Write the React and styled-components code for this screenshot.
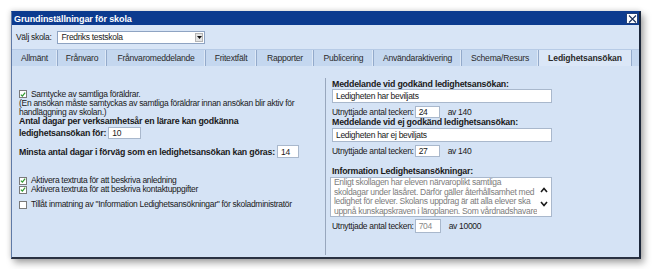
import React from 'react';
import styled, { createGlobalStyle } from 'styled-components';

const Global = createGlobalStyle`
  html, body { margin: 0; padding: 0; background: #ffffff; }
  body { font-family: "Liberation Sans", Arial, sans-serif; color: #1a1a1a; }
  * { box-sizing: border-box; }
`;

const Page = styled.div`
  width: 654px;
  height: 269px;
  padding: 11px 0 0 11px;
  overflow: hidden;
`;

const Window = styled.div`
  width: 630px;
  height: 248px;
  display: flex;
  flex-direction: column;
  background: #d5e3f5;
  border-left: 1px solid #5f7aa6;
  border-top: 1px solid #0c3b8f;
  border-right: 2px solid #1c273a;
  border-bottom: 2px solid #2a3242;
  box-shadow: 3px 4px 7px rgba(0, 0, 0, 0.35), -1px -1px 5px rgba(0, 0, 0, 0.12);
`;

const TitleBar = styled.div`
  height: 13px;
  background: #0c3b8f;
  display: flex;
  align-items: center;
  justify-content: space-between;
  padding-left: 2px;
  color: #ffffff;
  font-weight: bold;
  font-size: 9px;
  letter-spacing: -0.1px;
`;

const CloseButton = styled.div`
  width: 12px;
  height: 11px;
  margin-right: 1px;
  background: #ffffff;
  border: 1px solid #1f3f7a;
  display: flex;
  align-items: center;
  justify-content: center;
`;

const SchoolRow = styled.div`
  height: 24px;
  display: flex;
  align-items: center;
  padding-left: 4px;
  background: #d8e5f6;
  font-size: 8.5px;
  letter-spacing: -0.3px;
`;

const Select = styled.div`
  margin-left: 6px;
  width: 148px;
  height: 13px;
  background: #ffffff;
  border: 1px solid #8ea3c2;
  display: flex;
  align-items: center;
  justify-content: space-between;
  padding-left: 3px;
`;

const SelectArrow = styled.div`
  width: 8px;
  height: 9px;
  margin-right: 1px;
  background: #e4e4e4;
  border: 1px solid #b5b5b5;
  display: flex;
  align-items: center;
  justify-content: center;
`;

const TabStrip = styled.div`
  height: 17px;
  display: flex;
  background: #c4d7ef;
  border-top: 1px solid #b7cbe6;
`;

const Tab = styled.div`
  width: ${p => p.$w}px;
  display: flex;
  align-items: center;
  justify-content: center;
  font-size: 8.6px;
  letter-spacing: ${p => (p.$active ? -0.1 : -0.25)}px;
  color: #2a2a2a;
  border-right: 1px solid #93aacb;
  box-shadow: inset -1px 0 0 #dde8f6;
  background: ${p => (p.$active ? '#dbe7f7' : 'transparent')};
  font-weight: ${p => (p.$active ? 'bold' : 'normal')};
`;

const Content = styled.div`
  flex: 1;
  display: flex;
`;

const LeftPanel = styled.div`
  width: 313px;
  padding: 23px 0 0 7px;
  display: flex;
  flex-direction: column;
  font-size: 8.5px;
  letter-spacing: -0.3px;
`;

const Divider = styled.div`
  width: 1px;
  margin: 12px 0 2px;
  background: #98a7bd;
`;

const RightPanel = styled.div`
  flex: 1;
  padding: 13px 0 0 6px;
  display: flex;
  flex-direction: column;
  font-size: 8.5px;
  letter-spacing: -0.3px;
`;

const CheckRow = styled.div`
  height: ${p => p.$h}px;
  line-height: ${p => p.$h}px;
  margin-top: ${p => p.$mt || 0}px;
  display: flex;
  align-items: center;
  gap: 4px;
  white-space: nowrap;
`;

const Box = styled.span`
  width: 8px;
  height: 8px;
  flex: none;
  background: #ffffff;
  border: 1px solid #7a7a7a;
  display: flex;
  align-items: center;
  justify-content: center;
`;

const Note = styled.div`
  line-height: 9px;
  white-space: nowrap;
`;

const BoldLine = styled.div`
  font-weight: bold;
  font-size: 8.8px;
  letter-spacing: -0.2px;
  line-height: ${p => p.$lh || 9}px;
  margin-top: ${p => p.$mt || 0}px;
  white-space: nowrap;
`;

const FieldRow = styled.div`
  height: ${p => p.$h}px;
  margin-top: ${p => p.$mt || 0}px;
  display: flex;
  align-items: center;
  white-space: nowrap;
  font-weight: ${p => (p.$bold ? 'bold' : 'normal')};
  font-size: ${p => (p.$bold ? 8.8 : 8.5)}px;
  letter-spacing: ${p => (p.$bold ? -0.2 : -0.3)}px;
`;

const SmallInput = styled.div`
  width: ${p => p.$w}px;
  height: 100%;
  margin-left: ${p => p.$ml || 1}px;
  margin-right: ${p => p.$mr || 0}px;
  background: #ffffff;
  border: 1px solid #a9b8cc;
  display: flex;
  align-items: center;
  padding-left: 3px;
  font-weight: normal;
  font-size: 8.5px;
  letter-spacing: -0.3px;
  color: ${p => (p.$muted ? '#8a8a8a' : '#1a1a1a')};
`;

const TextInput = styled.div`
  width: 220px;
  height: ${p => p.$h}px;
  margin-top: ${p => p.$mt || 0}px;
  background: #ffffff;
  border: 1px solid #a9b8cc;
  display: flex;
  align-items: center;
  padding-left: 3px;
`;

const TextArea = styled.div`
  width: 222px;
  height: 40px;
  margin-top: 1px;
  margin-left: -2px;
  background: #ffffff;
  border: 1px solid #a9b8cc;
  display: flex;
  color: #7d7d7d;
  line-height: 9.5px;
  padding: 0 0 0 3px;
  overflow: hidden;
`;

const AreaText = styled.div`
  flex: 1;
  white-space: nowrap;
  overflow: hidden;
`;

const Scroll = styled.div`
  width: 14px;
  flex: none;
  display: flex;
  flex-direction: column;
  justify-content: center;
  align-items: center;
  gap: 8px;
`;

const Check = () => (
  <svg width="7" height="7" viewBox="0 0 7 7">
    <path d="M1 3.6 L2.8 5.4 L6 1.4" fill="none" stroke="#2f9a2f" strokeWidth="1.5" />
  </svg>
);

const Chevron = ({ up }) => (
  <svg width="8" height="6" viewBox="0 0 8 6">
    <path
      d={up ? 'M1 5 L4 1.5 L7 5' : 'M1 1 L4 4.5 L7 1'}
      fill="none"
      stroke="#1a1a1a"
      strokeWidth="1.6"
    />
  </svg>
);

const tabs = [
  ['Allmänt', 46],
  ['Frånvaro', 49],
  ['Frånvaromeddelande', 99],
  ['Fritextfält', 51],
  ['Rapporter', 57],
  ['Publicering', 60],
  ['Användaraktivering', 88],
  ['Schema/Resurs', 77],
  ['Ledighetsansökan', 93, true],
];

export default function App() {
  return (
    <Page>
      <Global />
      <Window>
        <TitleBar>
          <span>Grundinställningar för skola</span>
          <CloseButton>
            <svg width="9" height="8" viewBox="0 0 9 8">
              <path d="M1 0.5 L8 7.5 M8 0.5 L1 7.5" stroke="#1b2f5a" strokeWidth="1.1" />
            </svg>
          </CloseButton>
        </TitleBar>
        <SchoolRow>
          <span>Välj skola:</span>
          <Select>
            <span>Fredriks testskola</span>
            <SelectArrow>
              <svg width="5" height="3" viewBox="0 0 5 3">
                <path d="M0 0 L5 0 L2.5 3 Z" fill="#111" />
              </svg>
            </SelectArrow>
          </Select>
        </SchoolRow>
        <TabStrip>
          {tabs.map(([label, w, active]) => (
            <Tab key={label} $w={w} $active={active}>
              {label}
            </Tab>
          ))}
        </TabStrip>
        <Content>
          <LeftPanel>
            <CheckRow $h={10}>
              <Box><Check /></Box>
              <span>Samtycke av samtliga föräldrar.</span>
            </CheckRow>
            <Note>(En ansökan måste samtyckas av samtliga föräldrar innan ansökan blir aktiv för</Note>
            <Note>handläggning av skolan.)</Note>
            <BoldLine>Antal dagar per verksamhetsår en lärare kan godkänna</BoldLine>
            <FieldRow $h={12} $mt={1} $bold>
              <span>ledighetsansökan för:</span>
              <SmallInput $w={33} $ml={2}>10</SmallInput>
            </FieldRow>
            <FieldRow $h={13} $mt={6} $bold>
              <span>Minsta antal dagar i förväg som en ledighetsansökan kan göras:</span>
              <SmallInput $w={22} $ml={2}>14</SmallInput>
            </FieldRow>
            <CheckRow $h={9} $mt={18}>
              <Box><Check /></Box>
              <span>Aktivera textruta för att beskriva anledning</span>
            </CheckRow>
            <CheckRow $h={9}>
              <Box><Check /></Box>
              <span>Aktivera textruta för att beskriva kontaktuppgifter</span>
            </CheckRow>
            <CheckRow $h={9} $mt={6}>
              <Box />
              <span>Tillåt inmatning av "Information Ledighetsansökningar" för skoladministratör</span>
            </CheckRow>
          </LeftPanel>
          <Divider />
          <RightPanel>
            <BoldLine $lh={10}>Meddelande vid godkänd ledighetsansökan:</BoldLine>
            <TextInput $h={14}>Ledigheten har beviljats</TextInput>
            <FieldRow $h={12} $mt={3}>
              <span>Utnyttjade antal tecken:</span>
              <SmallInput $w={25} $mr={8}>24</SmallInput>
              <span>av 140</span>
            </FieldRow>
            <BoldLine $lh={10} $mt={-1}>Meddelande vid ej godkänd ledighetsansökan:</BoldLine>
            <TextInput $h={14} $mt={1}>Ledigheten har ej beviljats</TextInput>
            <FieldRow $h={12} $mt={3}>
              <span>Utnyttjade antal tecken:</span>
              <SmallInput $w={25} $mr={8}>27</SmallInput>
              <span>av 140</span>
            </FieldRow>
            <BoldLine $lh={10} $mt={9}>Information Ledighetsansökningar:</BoldLine>
            <TextArea>
              <AreaText>
                Enligt skollagen har eleven närvaroplikt samtliga<br />
                skoldagar under läsåret. Därför gäller återhållsamhet med<br />
                ledighet för elever. Skolans uppdrag är att alla elever ska<br />
                uppnå kunskapskraven i läroplanen. Som vårdnadshavare
              </AreaText>
              <Scroll>
                <Chevron up />
                <Chevron />
              </Scroll>
            </TextArea>
            <FieldRow $h={14} $mt={2}>
              <span>Utnyttjade antal tecken:</span>
              <SmallInput $w={26} $mr={8} $muted>704</SmallInput>
              <span>av 10000</span>
            </FieldRow>
          </RightPanel>
        </Content>
      </Window>
    </Page>
  );
}
